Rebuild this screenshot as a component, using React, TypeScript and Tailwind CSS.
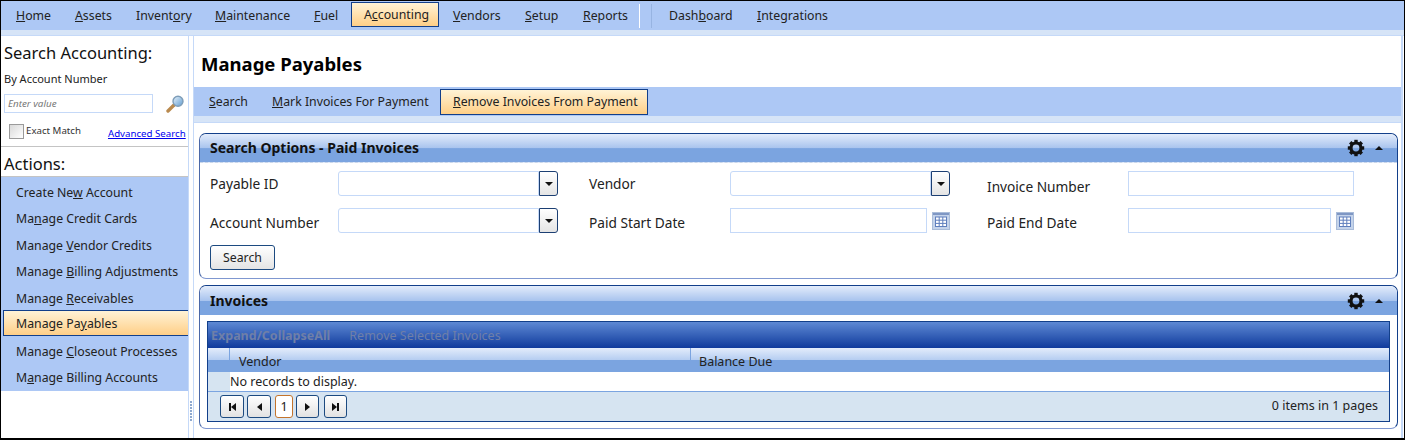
import React from 'react';

const font = "[font-family:'Noto_Sans',sans-serif]";

// Label with one underlined access-key letter
const Key = ({ text, at }: { text: string; at: number }) => (
  <span>
    {text.slice(0, at)}
    <span className="underline">{text[at]}</span>
    {text.slice(at + 1)}
  </span>
);

const navItems = [
  { text: 'Home', at: 0, w: 'w-[59px]' },
  { text: 'Assets', at: 0, w: 'w-[61px]' },
  { text: 'Inventory', at: 6, w: 'w-[79px]' },
  { text: 'Maintenance', at: 0, w: 'w-[99px]' },
  { text: 'Fuel', at: 0, w: 'w-[49px]' },
];

const actions = [
  { text: 'Create New Account', at: 9 },
  { text: 'Manage Credit Cards', at: 2 },
  { text: 'Manage Vendor Credits', at: 7 },
  { text: 'Manage Billing Adjustments', at: 7 },
  { text: 'Manage Receivables', at: 7 },
  { text: 'Manage Payables', at: 9, active: true },
  { text: 'Manage Closeout Processes', at: 7 },
  { text: 'Manage Billing Accounts', at: 1 },
];

const Gear = () => (
  <svg width="18" height="18" viewBox="0 0 18 18" className="block">
    <circle cx="9" cy="9" r="5" fill="none" stroke="#111" strokeWidth="3.2" />
    {[0, 45, 90, 135, 180, 225, 270, 315].map((a) => (
      <rect key={a} x="7.3" y="0.8" width="3.4" height="3" fill="#111" transform={`rotate(${a} 9 9)`} />
    ))}
  </svg>
);

const PanelHeader = ({ title, dashed }: { title: string; dashed?: boolean }) => (
  <div
    className={`flex items-center justify-between h-[29px] rounded-t-[7px] pl-[10px] pr-[14px] bg-[linear-gradient(#e3ecfb_0%,#a9c4ee_50%,#7ba4e0_52%,#7ba4e0_100%)] ${
      dashed ? 'border-b border-dashed border-[#c9d6ea]' : ''
    }`}
  >
    <span className="text-[14px] font-bold text-[#111] leading-none">{title}</span>
    <div className="flex items-center gap-[10px]">
      <Gear />
      <span className="w-0 h-0 border-x-[4px] border-x-transparent border-b-[4px] border-b-[#111]" />
    </div>
  </div>
);

const Combo = () => (
  <div className="flex w-[220px] h-[25px]">
    <div className="flex-1 bg-white border border-[#c5d9f8] rounded-l-[3px]" />
    <div className="flex items-center justify-center w-[19px] border border-[#1c3f73] rounded-r-[3px] bg-[linear-gradient(#ffffff,#e4e4e4)]">
      <span className="w-0 h-0 border-x-[4px] border-x-transparent border-t-[4px] border-t-[#111]" />
    </div>
  </div>
);

const CalendarIcon = () => (
  <svg width="18" height="18" viewBox="0 0 18 18" className="block">
    <rect x="0.5" y="0.5" width="17" height="17" fill="#c4d3ea" stroke="#a9bcd9" />
    <rect x="1" y="1" width="16" height="2" fill="#7f97c4" />
    <rect x="3.5" y="5" width="11" height="9.5" fill="#fff" stroke="#5f7fbd" />
    <path d="M7.2 5v9.5M10.8 5v9.5M3.5 8.2h11M3.5 11.4h11" stroke="#5f7fbd" strokeWidth="1" />
  </svg>
);

const DateField = ({ w }: { w: string }) => (
  <div className="flex items-center gap-[5px]">
    <div className={`${w} h-[25px] bg-white border border-[#c5d9f8]`} />
    <CalendarIcon />
  </div>
);

const Magnifier = () => (
  <svg width="19" height="18" viewBox="0 0 19 18" className="block">
    <defs>
      <linearGradient id="glass" x1="0" y1="0" x2="1" y2="1">
        <stop offset="0" stopColor="#e9f3fb" />
        <stop offset="1" stopColor="#5f9bd0" />
      </linearGradient>
    </defs>
    <path d="M8 10 L2 16" stroke="#b98a4e" strokeWidth="3.4" strokeLinecap="round" />
    <circle cx="12" cy="6.2" r="5" fill="url(#glass)" stroke="#7e9db8" strokeWidth="1.4" />
  </svg>
);

const PagerButton = ({ w, children }: { w: string; children: React.ReactNode }) => (
  <div className={`${w} flex items-center justify-center h-[23px] rounded-[3px] border border-[#1c4a80] bg-[linear-gradient(#ffffff,#e2e2e2)]`}>
    {children}
  </div>
);

const Left = () => <span className="w-0 h-0 border-y-[4px] border-y-transparent border-r-[5px] border-r-[#111]" />;
const Right = () => <span className="w-0 h-0 border-y-[4px] border-y-transparent border-l-[5px] border-l-[#111]" />;
const Bar = () => <span className="w-[2px] h-[8px] bg-[#111]" />;

const Label = ({ pt, children }: { pt?: string; children: React.ReactNode }) => (
  <span className={`text-[13.7px] leading-none text-[#222] ${pt ?? ''}`}>{children}</span>
);

export default function App() {
  return (
    <div className={`${font} w-[1405px] h-[440px] overflow-hidden bg-white border border-black border-b-2 flex flex-col text-[#222]`}>
      {/* top menu */}
      <nav className="flex items-center h-[29px] pl-[3px] bg-[#adc8f5] text-[12.3px]">
        {navItems.map((n) => (
          <div key={n.text} className={`${n.w} pl-3 pt-[2px]`}>
            <Key text={n.text} at={n.at} />
          </div>
        ))}
        <div className="w-[88px] h-[25px] self-start mt-px flex items-center pl-3 pt-[2px] border border-[#123f8a] bg-[linear-gradient(#fff3d6,#ffcf87)]">
          <Key text="Accounting" at={1} />
        </div>
        <div className="w-[72px] pl-3 pt-[2px] ml-[2px]">
          <Key text="Vendors" at={0} />
        </div>
        <div className="w-[58px] pl-3 pt-[2px]">
          <Key text="Setup" at={0} />
        </div>
        <div className="w-[67px] pl-3 pt-[2px]">
          <Key text="Reports" at={0} />
        </div>
        <div className="w-px h-[24px] bg-white ml-[1px]" />
        <div className="w-px h-[24px] bg-[#97b4e2] ml-[11px]" />
        <div className="w-[105px] pl-[17px] pt-[2px]">
          <Key text="Dashboard" at={4} />
        </div>
        <div className="pt-[2px]">
          <Key text="Integrations" at={0} />
        </div>
      </nav>
      <div className="h-[6px] bg-[#d6e4f7] border-b border-[#c5d9f8]" />

      <div className="flex flex-1 min-h-0">
        {/* sidebar */}
        <aside className="w-[187px] shrink-0 flex flex-col">
          <div className="h-[111px] border-b border-[#c4c4c4] pt-[5px] flex flex-col">
            <div className="pl-[3px] text-[16.5px] leading-[24px] text-[#111]">Search Accounting:</div>
            <div className="pl-[3px] mt-[6px] text-[11px] leading-[16px] text-[#222]">By Account Number</div>
            <div className="flex items-center pl-[3px] mt-[7px]">
              <div className="w-[149px] h-[19px] border border-[#c5d9f8] pl-[3px] text-[9.8px] italic leading-[17px] text-[#777]">Enter value</div>
              <div className="ml-[13px]">
                <Magnifier />
              </div>
            </div>
            <div className="flex items-start pl-[8px] mt-[11px]">
              <div className="w-[15px] h-[15px] border border-[#9a9a9a] bg-[linear-gradient(135deg,#d9d9d9,#ffffff)]" />
              <span className="ml-[2px] text-[9.7px] leading-[14px] text-[#333]">Exact Match</span>
              <a className="ml-[27px] mt-[3px] text-[9.7px] leading-[14px] text-[#0000ee] underline">Advanced Search</a>
            </div>
          </div>
          <div className="pl-[3px] pt-[4px] text-[16.5px] leading-[25px] text-[#111] h-[29px]">Actions:</div>
          <div className="bg-[#adc8f5] border-t border-[#c4c4c4] pb-[2px] text-[12.3px]">
            {actions.map((a) => (
              <div
                key={a.text}
                className={`h-[26.5px] flex items-center ${
                  a.active
                    ? 'ml-[2px] pl-[12px] pt-[3px] border border-r-0 border-[#123f8a] bg-[linear-gradient(#fff3d6,#ffcf87)]'
                    : 'pl-[15px] pt-[5px]'
                }`}
              >
                <Key text={a.text} at={a.at} />
              </div>
            ))}
          </div>
        </aside>

        {/* splitter */}
        <div className="relative w-[6px] shrink-0 border-x border-[#c5d9f8]">
          <div className="absolute left-[1px] top-[365px] flex flex-col gap-px">
            {[0, 1, 2, 3, 4, 5, 6].map((i) => (
              <span key={i} className="w-[2px] h-[2px] bg-[#8fa9cf]" />
            ))}
          </div>
        </div>

        {/* main */}
        <main className="flex-1 min-w-0 flex flex-col border-r-2 border-[#c5d9f8] mr-[1px]">
          <h1 className="h-[51px] pl-[7px] pt-[15px] text-[18.5px] leading-[26px] font-bold text-black">Manage Payables</h1>
          <div className="flex items-center h-[29px] pl-[3px] bg-[#adc8f5] text-[12.3px]">
            <div className="w-[63px] pl-3 pt-[2px]">
              <Key text="Search" at={0} />
            </div>
            <div className="w-[180px] pl-3 pt-[2px]">
              <Key text="Mark Invoices For Payment" at={0} />
            </div>
            <div className="w-[208px] h-[26px] flex items-center pl-3 pt-[2px] border border-[#123f8a] bg-[linear-gradient(#fff3d6,#ffcf87)]">
              <Key text="Remove Invoices From Payment" at={0} />
            </div>
          </div>
          <div className="h-[7px] bg-[#d6e4f7] border-b border-[#c5d9f8]" />

          <div className="flex flex-col gap-[6px] pl-[5px] pr-[3px] pt-[10px]">
            <section className="h-[146px] rounded-[7px] border border-[#123f8a] border-b-[#7f97d0] border-l-[#4a68a8]">
              <PanelHeader title="Search Options - Paid Invoices" dashed />
              <div className="grid grid-cols-[128px_251px_141px_257px_141px_1fr] grid-rows-[25px_25px_25px] gap-y-[12px] pl-[10px] pt-[8px] items-center">
                <Label>Payable ID</Label>
                <Combo />
                <Label>Vendor</Label>
                <Combo />
                <Label pt="pt-[6px]">Invoice Number</Label>
                <div className="w-[226px] h-[25px] bg-white border border-[#c5d9f8]" />
                <Label pt="pt-[4px]">Account Number</Label>
                <Combo />
                <Label pt="pt-[4px]">Paid Start Date</Label>
                <DateField w="w-[197px]" />
                <Label pt="pt-[5px]">Paid End Date</Label>
                <DateField w="w-[203px]" />
                <div className="w-[65px] h-[25px] flex items-center justify-center pt-[2px] rounded-[3px] border border-[#1c4a80] bg-[linear-gradient(#ffffff,#e4e4e4)] text-[12.3px]">Search</div>
              </div>
            </section>

            <section className="h-[144px] rounded-[7px] border border-[#123f8a] border-b-[#7f97d0] border-l-[#4a68a8]">
              <PanelHeader title="Invoices" />
              <div className="mx-[7px] mt-[6px] border border-[#123f8a] text-[12.5px]">
                <div className="flex items-center gap-[19px] h-[26px] pl-[3px] pt-[2px] bg-[linear-gradient(#5e89d4,#0f3a9c)]">
                  <span className="font-bold text-[#6f7fa8]">Expand/CollapseAll</span>
                  <span className="text-[#6f7fa8]">Remove Selected Invoices</span>
                </div>
                <div className="flex h-[24px] bg-[linear-gradient(#e3ecfb_0%,#b5cdf1_50%,#7ba4e0_52%,#7ba4e0_100%)]">
                  <div className="w-[22px] border-r border-[#7ba4e0]" />
                  <div className="w-[461px] pl-[9px] flex items-end border-r border-[#7ba4e0]">Vendor</div>
                  <div className="pl-[8px] flex items-end">Balance Due</div>
                </div>
                <div className="flex h-[20px] border-b border-[#7ba4e0]">
                  <div className="w-[22px] bg-[#d6e4f1]" />
                  <div className="leading-[19px]">No records to display.</div>
                </div>
                <div className="flex items-center justify-between h-[29px] pl-[12px] pr-[11px] bg-[#d6e4f1]">
                  <div className="flex items-center gap-[3px]">
                    <PagerButton w="w-[24px]">
                      <Bar />
                      <Left />
                    </PagerButton>
                    <PagerButton w="w-[24px]">
                      <Left />
                    </PagerButton>
                    <div className="w-[18px] h-[23px] ml-px rounded-[3px] border border-[#c4742c] bg-white text-center leading-[21px]">1</div>
                    <PagerButton w="w-[23px]">
                      <Right />
                    </PagerButton>
                    <div className="ml-[2px]">
                      <PagerButton w="w-[23px]">
                        <Right />
                        <Bar />
                      </PagerButton>
                    </div>
                  </div>
                  <span>0 items in 1 pages</span>
                </div>
              </div>
            </section>
          </div>
        </main>
      </div>
    </div>
  );
}
